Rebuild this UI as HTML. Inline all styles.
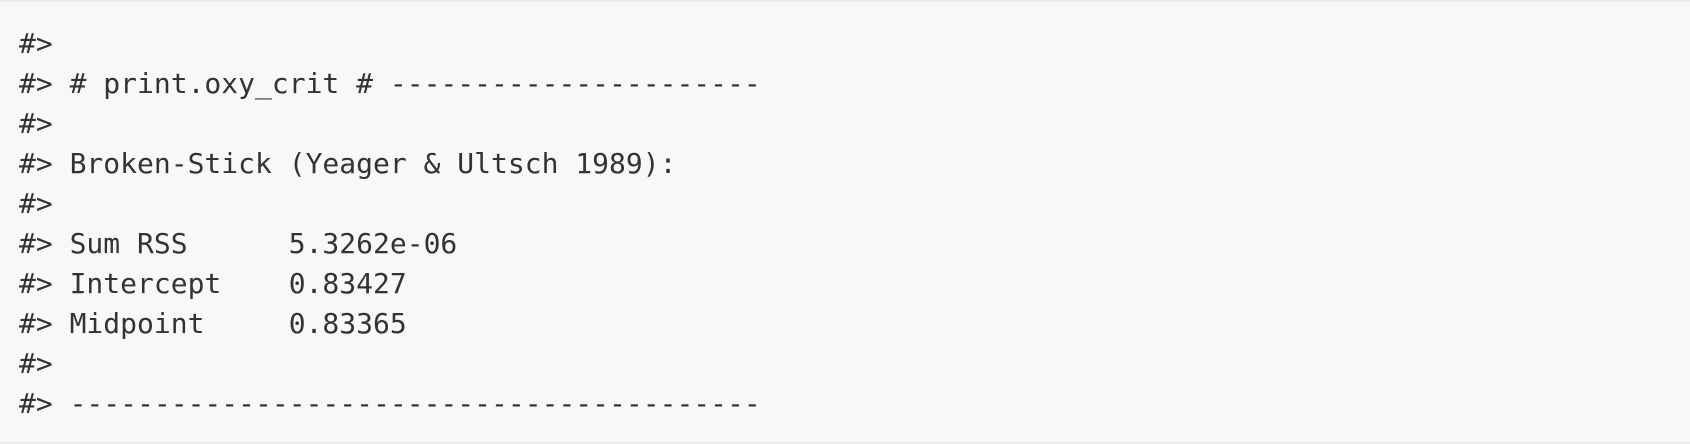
<!DOCTYPE html>
<html><head><style>
html,body{margin:0;padding:0;}
body{width:1690px;height:444px;background:#fff;overflow:hidden;}
.box{position:absolute;left:0;top:0;width:1690px;height:444px;box-sizing:border-box;background:#f8f8f8;border-top:2px solid #ececec;border-bottom:2px solid #ececec;}
pre{margin:0;position:absolute;left:19px;top:22px;font-family:"DejaVu Sans Mono","Liberation Mono",monospace;font-size:28px;line-height:40px;color:#333;}
</style></head><body><div class="box"><pre>#&gt;
#&gt; # print.oxy_crit # ----------------------
#&gt;
#&gt; Broken-Stick (Yeager &amp; Ultsch 1989):
#&gt;
#&gt; Sum RSS      5.3262e-06
#&gt; Intercept    0.83427
#&gt; Midpoint     0.83365
#&gt;
#&gt; -----------------------------------------</pre></div></body></html>
